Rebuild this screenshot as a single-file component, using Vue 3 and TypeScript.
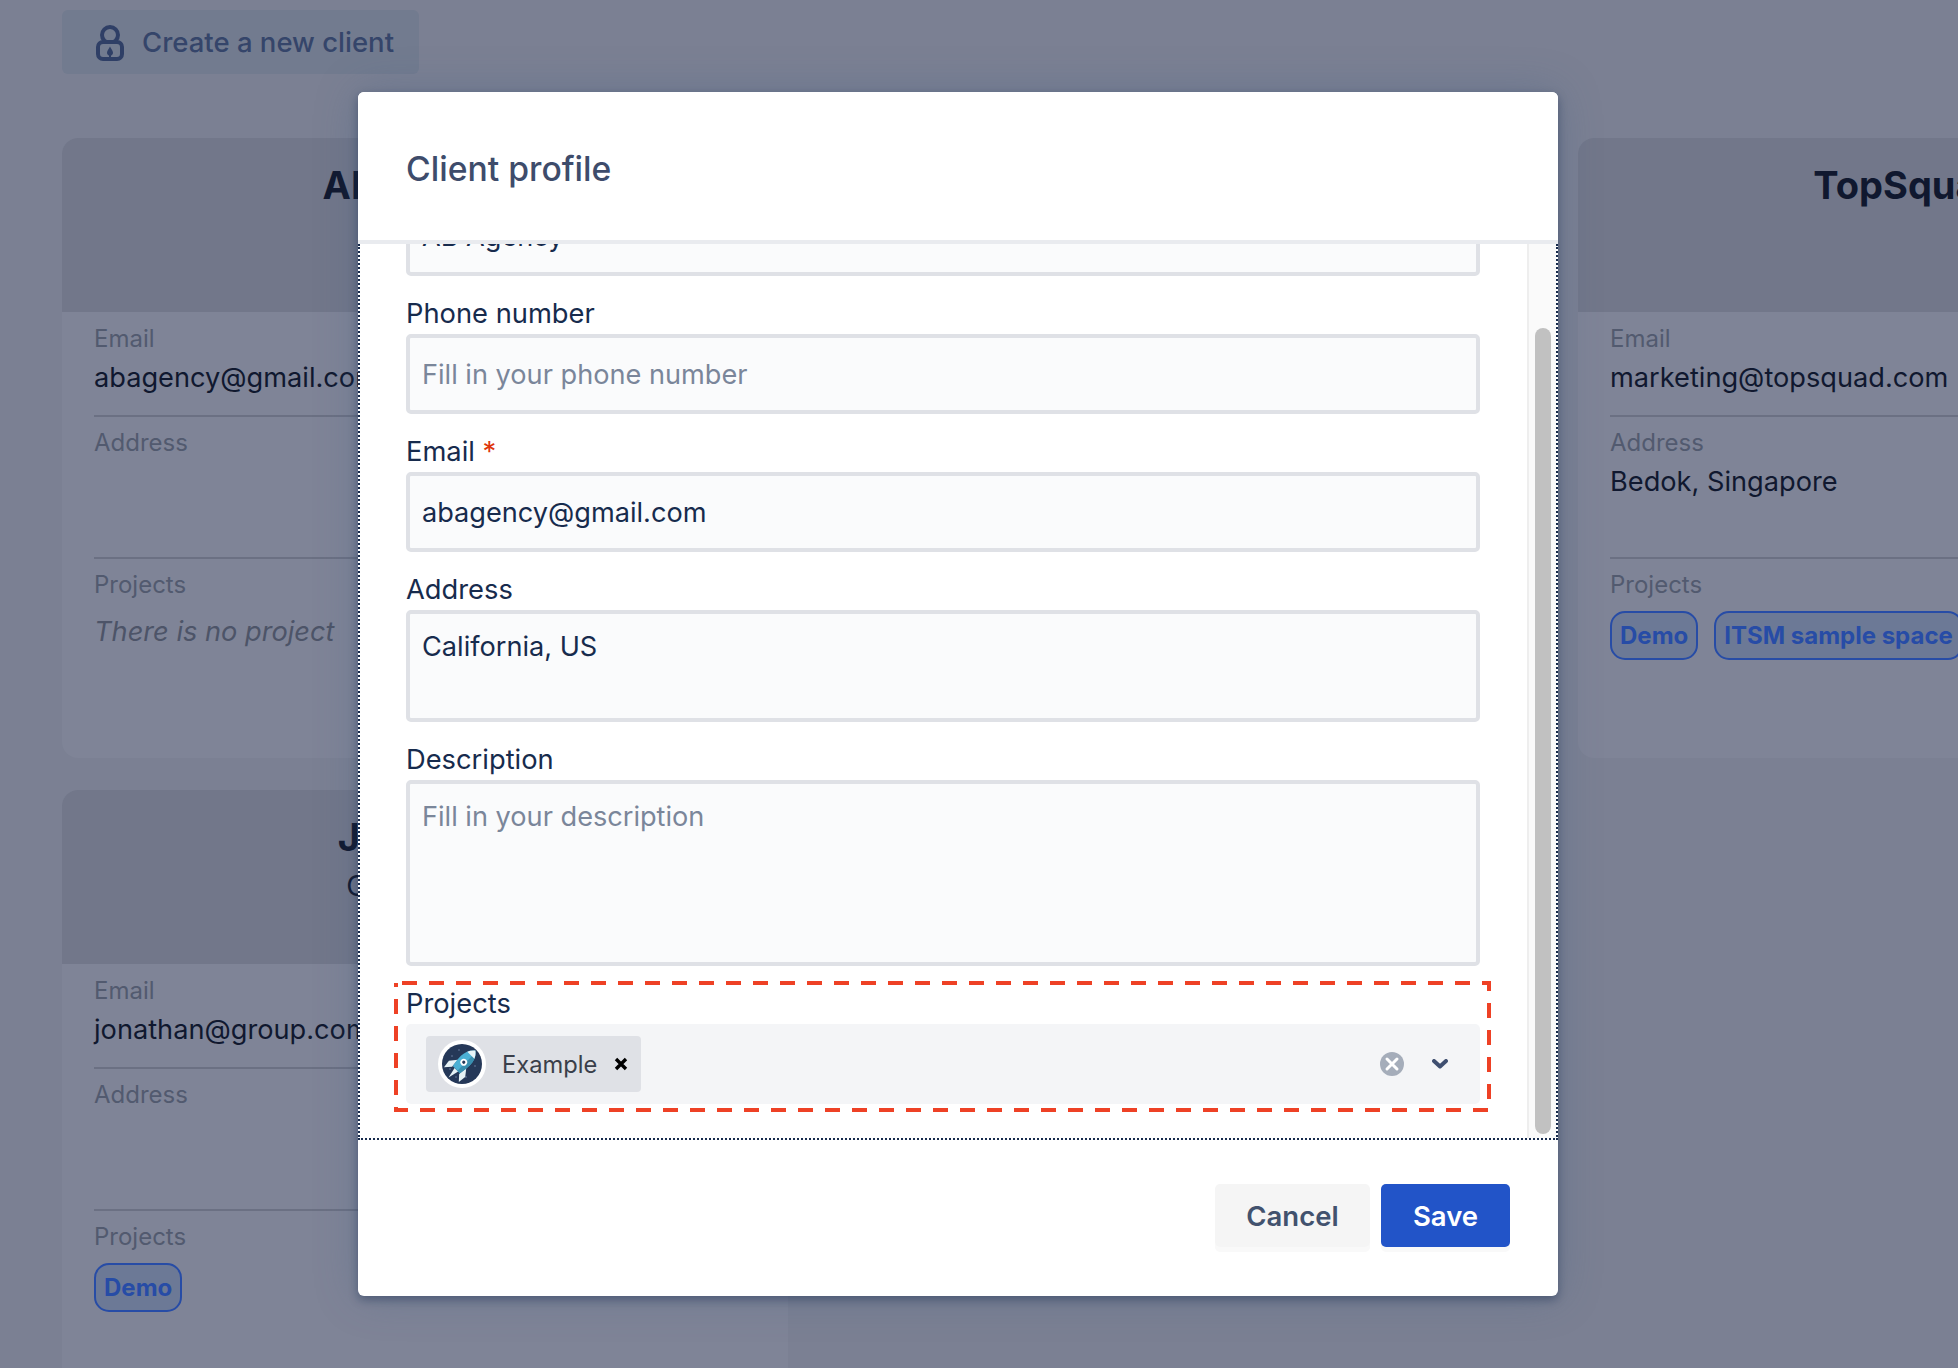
<script setup lang="ts">
interface Project { name: string }
interface Client {
  name: string
  sub?: string
  email: string
  address: string
  projects: Project[]
  hidden?: boolean
}
const clients: Client[] = [
  { name: 'AB Agency', email: 'abagency@gmail.com', address: '', projects: [] },
  { name: '', email: '', address: '', projects: [], hidden: true },
  { name: 'TopSquad Ltd', email: 'marketing@topsquad.com', address: 'Bedok, Singapore', projects: [{ name: 'Demo' }, { name: 'ITSM sample space' }] },
  { name: 'Jonathan', sub: 'CEO, Group', email: 'jonathan@group.com', address: '', projects: [{ name: 'Demo' }] }
]
const stars: [number, number][] = [[10, 12], [30, 9], [33, 22], [8, 25], [24, 33], [17, 6], [14, 33]]
</script>

<template>
  <div class="page">
    <div class="toolbar">
      <button class="create" type="button">
        <svg class="lock" width="28" height="36" viewBox="0 0 28 36" fill="none">
          <circle cx="14" cy="10" r="8" stroke="#2f3f66" stroke-width="4" />
          <rect x="2" y="17" width="24" height="17" rx="5" fill="#727b8f" stroke="#2f3f66" stroke-width="4" />
          <path d="M14 21.500c1.100 2.400 3 4.300 3 6.300 0 1.500-1 2.500-2 2.800V33h-2v-2.400c-1-.3-2-1.300-2-2.800 0-2 1.900-3.900 3-6.300z" fill="#2f3f66" />
        </svg>
        <span>Create a new client</span>
      </button>
    </div>

    <div class="grid">
      <article v-for="(c, i) in clients" :key="i" class="card" :class="{ ghost: c.hidden }">
        <header class="card-head">
          <div class="card-name">{{ c.name }}</div>
          <div v-if="c.sub" class="card-sub">{{ c.sub }}</div>
        </header>
        <section class="info">
          <div class="info-label">Email</div>
          <div class="info-value">{{ c.email }}</div>
        </section>
        <section class="info">
          <div class="info-label">Address</div>
          <div class="info-value address">{{ c.address }}</div>
        </section>
        <section class="info last">
          <div class="info-label">Projects</div>
          <div v-if="c.projects.length" class="tags">
            <span v-for="p in c.projects" :key="p.name" class="tag">{{ p.name }}</span>
          </div>
          <div v-else class="none">There is no project</div>
        </section>
      </article>
    </div>

    <div class="overlay">
      <div class="modal">
        <div class="modal-head">Client profile</div>
        <div class="modal-body">
          <div class="form">
            <div class="field">
              <label class="label">Client name <span class="req">*</span></label>
              <input class="input" value="AB Agency" readonly />
            </div>
            <div class="field">
              <label class="label">Phone number</label>
              <input class="input" placeholder="Fill in your phone number" readonly />
            </div>
            <div class="field">
              <label class="label">Email <span class="req">*</span></label>
              <input class="input" value="abagency@gmail.com" readonly />
            </div>
            <div class="field">
              <label class="label">Address</label>
              <textarea class="input area addr" readonly>California, US</textarea>
            </div>
            <div class="field">
              <label class="label">Description</label>
              <textarea class="input area desc" placeholder="Fill in your description" readonly></textarea>
            </div>
            <div class="field">
              <label class="label">Projects</label>
              <div class="select">
                <div class="chip">
                  <svg class="avatar" width="48" height="48" viewBox="0 0 48 48">
                    <circle cx="24" cy="24" r="24" fill="#fff" />
                    <circle cx="24" cy="24" r="20" fill="#253858" />
                    <g transform="translate(4 4)">
                      <circle v-for="(s, k) in stars" :key="k" :cx="s[0]" :cy="s[1]" r="1" fill="#4f6285" />
                    </g>
                    <g transform="rotate(45 24 24)">
                      <path d="M18 24l-5.500 7 1 8 5.500-6z" fill="#e6f2f6" />
                      <path d="M30 24l5.500 7-1 8-5.500-6z" fill="#e6f2f6" />
                      <path d="M21.500 32h5L24 43z" fill="#e6f2f6" />
                      <path d="M24 5c4.700 3.800 6.500 8.500 6.500 14 0 4.500-.7 9-1.500 13H19c-.8-4-1.500-8.500-1.500-13 0-5.500 1.800-10.200 6.500-14z" fill="#4bb0d4" />
                      <path d="M25.500 6.300c3.400 3.400 5 7.700 5 12.700 0 4.500-.7 9-1.500 13h-3.500z" fill="#3a8fb0" />
                      <path d="M24 5c2.300 1.900 4 4 5 6.500H19c1-2.500 2.700-4.600 5-6.500z" fill="#e8f5f9" />
                      <circle cx="24" cy="21.500" r="3.400" fill="#fff" />
                      <circle cx="24" cy="21.500" r="1.600" fill="#253858" />
                    </g>
                  </svg>
                  <span class="chip-text">Example</span>
                  <svg class="chip-x" width="14" height="14" viewBox="0 0 14 14">
                    <path d="M2 2l10 10M12 2L2 12" stroke="#000" stroke-width="3.400" fill="none" />
                  </svg>
                </div>
                <svg class="clear" width="24" height="24" viewBox="0 0 24 24">
                  <circle cx="12" cy="12" r="12" fill="#a5adba" />
                  <path d="M7 7l10 10M17 7L7 17" stroke="#fff" stroke-width="3" stroke-linecap="round" />
                </svg>
                <svg class="chev" width="16" height="10" viewBox="0 0 16 10">
                  <path d="M2 2l6 5.500L14 2" stroke="#3f4f70" stroke-width="4" fill="none" stroke-linecap="round" stroke-linejoin="round" />
                </svg>
              </div>
            </div>
          </div>
          <div class="scrollbar"><div class="thumb"></div></div>
        </div>
        <div class="modal-foot">
          <button class="btn cancel" type="button">Cancel</button>
          <button class="btn save" type="button">Save</button>
        </div>
      </div>
      <svg class="annotation" width="1958" height="1368" viewBox="0 0 1958 1368">
        <rect x="396" y="983" width="1093" height="127" fill="none" stroke="#ee4125" stroke-width="4" stroke-dasharray="15 12" stroke-dashoffset="21" />
      </svg>
    </div>
  </div>
</template>

<style>
html, body { margin: 0; overflow: hidden; background: #7b8093; }
</style>

<style scoped>
.page {
  position: relative;
  width: 1958px;
  height: 1368px;
  overflow: hidden;
  background: #7b8093;
  font-family: Inter, "Liberation Sans", sans-serif;
  color: #121a33;
}
.page div, .page section, .page header, .page article, .page input, .page textarea, .page button { box-sizing: border-box; }
.toolbar { padding: 10px 0 0 62px; height: 138px; }
.create {
  display: flex;
  align-items: center;
  gap: 18px;
  width: 357px;
  height: 64px;
  padding: 0 0 0 34px;
  border: 0;
  border-radius: 6px;
  background: #727b8f;
  color: #35456a;
  font: 500 27.5px Inter, sans-serif;
  white-space: nowrap;
}
.lock { flex: none; margin-top: 2px; }
.grid {
  display: grid;
  grid-template-columns: repeat(3, 726px);
  grid-auto-rows: 620px;
  gap: 32px;
  padding-left: 62px;
}
.card {
  background: #7f8497;
  border-radius: 16px;
  overflow: hidden;
}
.ghost { visibility: hidden; }
.card-head {
  height: 174px;
  padding-top: 25px;
  background: #72778a;
  text-align: center;
}
.card-name {
  font-size: 38px;
  font-weight: 700;
  line-height: 44px;
  color: #10182f;
  white-space: nowrap;
}
.card-sub {
  margin-top: 7px;
  font-size: 28.5px;
  line-height: 40px;
  color: #10182f;
}
.info {
  margin: 0 32px;
  padding: 11px 0 18px;
  border-bottom: 2px solid #6b7083;
}
.info:first-of-type { padding: 12px 0 17px; }
.info.last { border-bottom: 0; }
.info-label {
  font-size: 24px;
  line-height: 30px;
  color: #525a6f;
}
.info-value {
  margin-top: 4px;
  font-size: 27.2px;
  line-height: 40px;
  color: #10182f;
  white-space: nowrap;
}
.address { min-height: 77px; }
.none {
  margin-top: 12px;
  font-size: 27.2px;
  line-height: 40px;
  font-style: italic;
  color: #4d5468;
}
.tags { display: flex; gap: 16px; margin-top: 11px; }
.tag {
  box-sizing: border-box;
  display: flex;
  align-items: center;
  height: 49px;
  padding: 0 8px;
  border: 2.5px solid #274ca6;
  border-radius: 15px;
  background: #6c7996;
  color: #274ca6;
  font-size: 24px;
  font-weight: 700;
  white-space: nowrap;
}
.overlay {
  position: absolute;
  inset: 0;
  display: flex;
  justify-content: center;
  padding: 92px 42px 0 0;
}
.modal {
  display: flex;
  flex-direction: column;
  width: 1200px;
  height: 1204px;
  border-radius: 6px;
  background: #fff;
  overflow: hidden;
  box-shadow: 0 4px 10px rgba(9, 30, 66, 0.35), 0 0 44px rgba(60, 90, 130, 0.3);
}
.modal-head {
  flex: none;
  position: relative;
  height: 152px;
  padding: 55px 48px 0;
  border-bottom: 4px solid #e9ebef;
  background: #fff;
  font-size: 33.7px;
  line-height: 44px;
  font-weight: 500;
  color: #3e4c6b;
}
.modal-body {
  position: relative;
  flex: none;
  height: 896px;
  overflow: hidden;
  border: 2px dotted #172b4d;
  border-top: 0;
}
.form { margin-top: -82px; padding: 0 76px 0 46px; }
.field { margin-bottom: 24px; }
.label {
  display: block;
  height: 34px;
  font-size: 27.3px;
  line-height: 28px;
  color: #172b4d;
}
.req { color: #de350b; }
.input {
  display: block;
  width: 100%;
  height: 80px;
  padding: 0 12px;
  border: 4px solid #dfe1e6;
  border-radius: 5px;
  background: #fafbfc;
  color: #172b4d;
  font: 400 27.15px Inter, sans-serif;
  outline: none;
  resize: none;
}
.input::placeholder { color: #7a869a; opacity: 1; }
.area { padding-top: 15px; line-height: 36px; overflow: hidden; }
.addr { height: 112px; }
.desc { height: 186px; }
.select {
  display: flex;
  align-items: center;
  height: 80px;
  padding: 0 32px 0 20px;
  border-radius: 5px;
  background: #f4f5f7;
}
.chip {
  display: flex;
  align-items: center;
  width: 215px;
  height: 56px;
  padding-left: 12px;
  border-radius: 4px;
  background: #dfe1e6;
}
.avatar { flex: none; }
.chip-text {
  margin-left: 16px;
  font-size: 23.7px;
  color: #3a3f4a;
}
.chip-x { flex: none; margin-left: 17px; }
.clear { margin-left: auto; }
.chev { margin-left: 28px; }
.scrollbar {
  position: absolute;
  top: 0;
  bottom: 0;
  right: 0;
  width: 29px;
  padding: 84px 5px 4px 6px;
  border-left: 2px solid #eeeeee;
  background: #fafafa;
}
.thumb {
  width: 16px;
  height: 806px;
  border-radius: 8px;
  background: #c1c1c1;
}
.modal-foot {
  flex: none;
  display: flex;
  justify-content: flex-end;
  gap: 11px;
  padding: 44px 48px 0 0;
}
.btn {
  height: 63px;
  border: 0;
  border-radius: 5px;
  font: 600 27.5px Inter, sans-serif;
  box-shadow: 0 5px 0 #f9f9f9;
}
.cancel { width: 155px; background: #f5f5f5; color: #42526e; }
.save { width: 129px; background: #2254c8; color: #fff; }
.annotation {
  position: absolute;
  left: 0;
  top: 0;
  pointer-events: none;
}
</style>
